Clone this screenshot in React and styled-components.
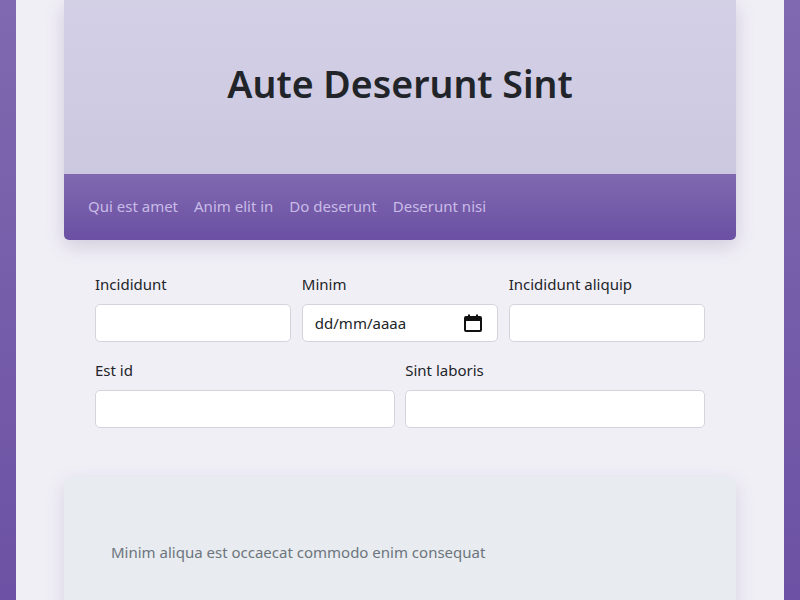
import React from 'react'
import styled, { createGlobalStyle } from 'styled-components'

const GlobalStyle = createGlobalStyle`
  html, body {
    margin: 0;
    padding: 0;
  }
  body {
    min-height: 600px;
    background: linear-gradient(180deg, #8069b0 0%, #6b50a3 100%);
    font-family: 'Noto Sans', 'Open Sans', sans-serif;
    color: #212529;
  }
  * {
    box-sizing: border-box;
  }
`

const Page = styled.div`
  margin: 0 16px;
  min-height: 600px;
  background-color: #f1eff6;
  padding: 0 48px;
`

const HeaderCard = styled.header`
  border-radius: 0 0 5px 5px;
  box-shadow: 0 6px 20px rgba(60, 40, 100, 0.18);
  overflow: hidden;
`

const Hero = styled.div`
  height: 174px;
  background: linear-gradient(180deg, #d3d0e6 0%, #cbc8e0 100%);
  display: flex;
  align-items: center;
  justify-content: center;
  padding-bottom: 8px;

  h1 {
    margin: 0;
    font-size: 37.5px;
    font-weight: 600;
    color: #212529;
  }
`

const Nav = styled.nav`
  height: 66px;
  background: linear-gradient(180deg, #8069b0 0%, #6b50a3 100%);
  display: flex;
  align-items: center;
  padding: 0 16px 2px;
`

const NavLink = styled.a`
  padding: 0 8px;
  font-size: 15px;
  color: #c9bbe7;
  text-decoration: none;
`

const Form = styled.form`
  display: grid;
  grid-template-columns: repeat(6, 1fr);
  column-gap: 10.5px;
  row-gap: 16px;
  padding: 32px 31px 0;
`

const Field = styled.div`
  grid-column: span ${({ span }) => span};
  display: flex;
  flex-direction: column;

  label {
    font-size: 15px;
    line-height: 24px;
    margin-bottom: 8px;
    color: #212529;
  }
`

const Input = styled.input`
  height: 38px;
  width: 100%;
  border: 1px solid #d3d5dd;
  border-radius: 5px;
  background: #fff;
  padding: 6px 12px;
  font-family: inherit;
  font-size: 15px;
  color: #212529;
  outline: none;

  &::placeholder {
    color: #212529;
  }
`

const DateWrap = styled.div`
  position: relative;

  svg {
    position: absolute;
    right: 16px;
    top: 10px;
  }
`

const InfoCard = styled.section`
  margin-top: 49px;
  background-color: #e8ebef;
  border-radius: 6px;
  box-shadow: 0 6px 20px rgba(60, 40, 100, 0.14);
  padding: 63px 47px 60px;
  min-height: 160px;

  p {
    margin: 0;
    font-size: 15px;
    line-height: 24px;
    color: #6c757d;
  }
`

const CalendarIcon = () => (
  <svg width="18" height="18" viewBox="0 0 18 18">
    <rect x="1" y="3" width="16" height="14" rx="1" fill="none" stroke="#111" strokeWidth="2" />
    <rect x="1" y="3" width="16" height="4" fill="#111" />
    <rect x="4" y="0.5" width="2" height="3" fill="#111" />
    <rect x="12" y="0.5" width="2" height="3" fill="#111" />
  </svg>
)

const links = ['Qui est amet', 'Anim elit in', 'Do deserunt', 'Deserunt nisi']

const App = () => {
  return (
    <>
      <GlobalStyle />
      <Page>
        <HeaderCard>
          <Hero>
            <h1>Aute Deserunt Sint</h1>
          </Hero>
          <Nav>
            {links.map((link) => (
              <NavLink key={link} href="#">
                {link}
              </NavLink>
            ))}
          </Nav>
        </HeaderCard>

        <Form>
          <Field span={2}>
            <label>Incididunt</label>
            <Input type="text" />
          </Field>
          <Field span={2}>
            <label>Minim</label>
            <DateWrap>
              <Input type="text" placeholder="dd/mm/aaaa" />
              <CalendarIcon />
            </DateWrap>
          </Field>
          <Field span={2}>
            <label>Incididunt aliquip</label>
            <Input type="text" />
          </Field>
          <Field span={3}>
            <label>Est id</label>
            <Input type="text" />
          </Field>
          <Field span={3}>
            <label>Sint laboris</label>
            <Input type="text" />
          </Field>
        </Form>

        <InfoCard>
          <p>Minim aliqua est occaecat commodo enim consequat</p>
        </InfoCard>
      </Page>
    </>
  )
}

export default App
